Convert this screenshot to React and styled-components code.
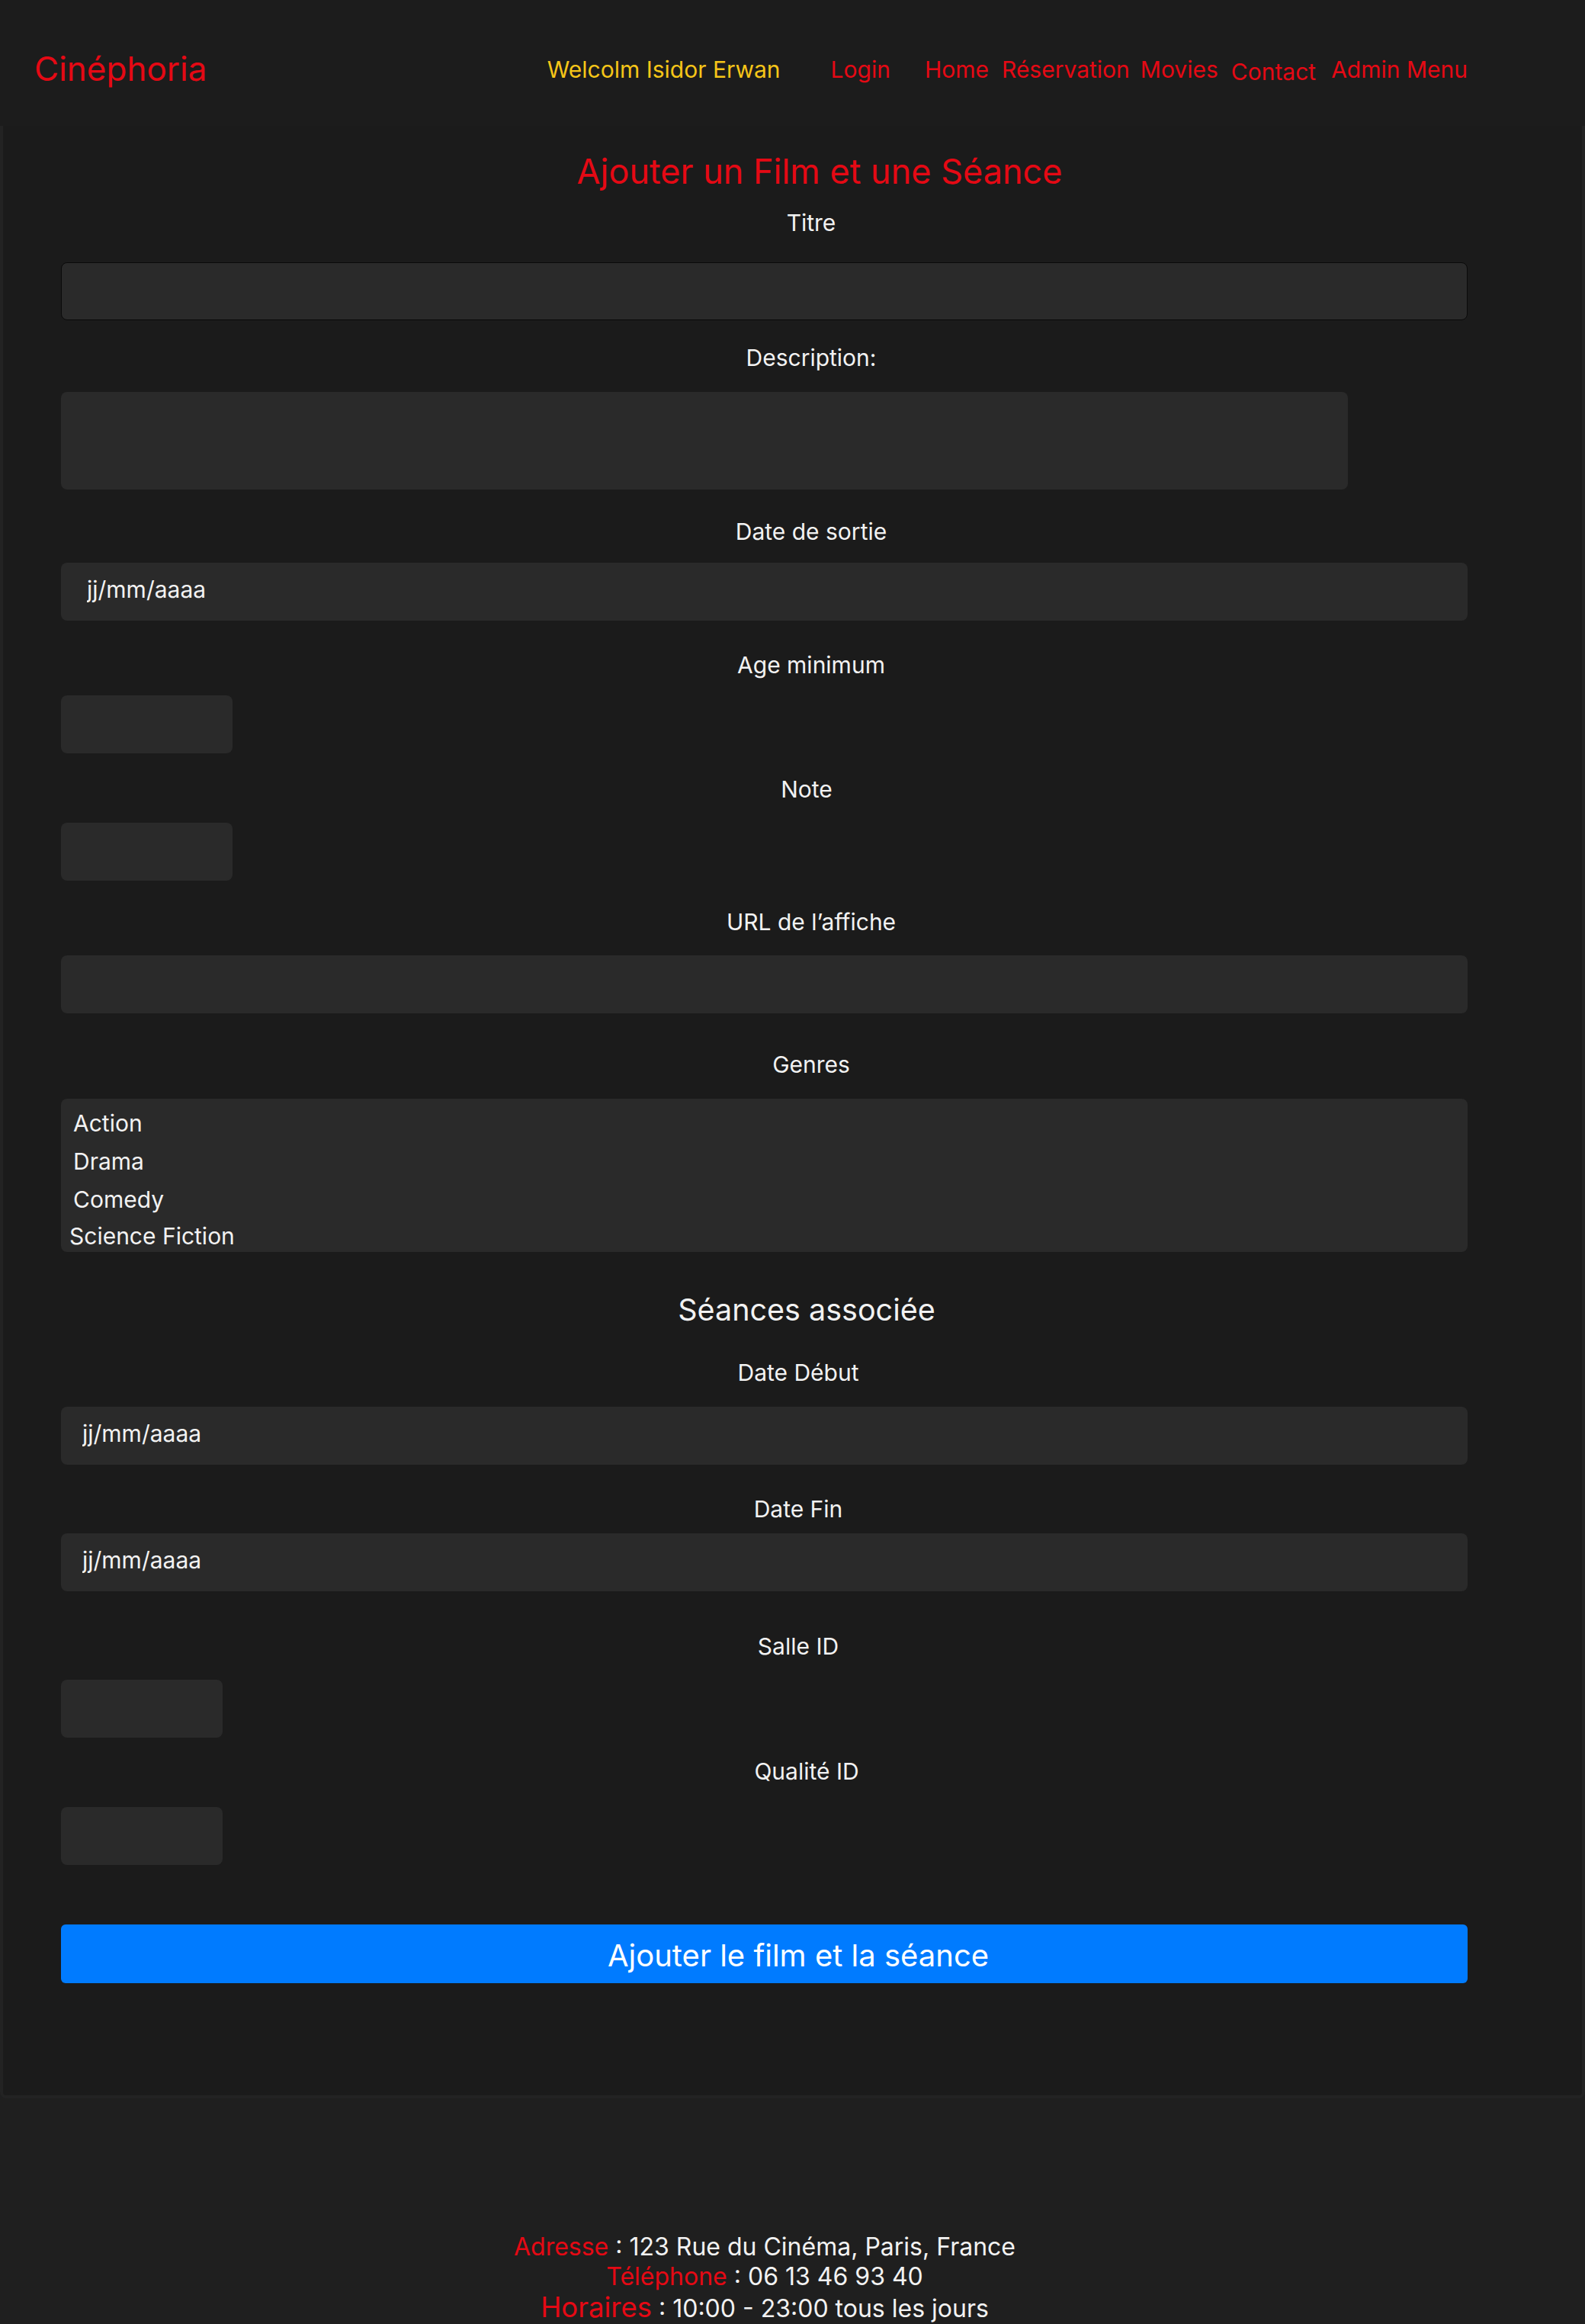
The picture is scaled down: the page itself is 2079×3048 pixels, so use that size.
import React from "react";
import styled, { createGlobalStyle } from "styled-components";

const GlobalStyle = createGlobalStyle`
  body {
    margin: 0;
    background: #1f1f1f;
    font-family: Inter, "Noto Sans", "Liberation Sans", sans-serif;
    color: #f2f2f2;
  }
`;

const RED = "#e50914";

const Header = styled.header`
  height: 165px;
  background: #1c1c1c;
  display: flex;
  align-items: flex-start;
  justify-content: space-between;
  padding: 0 154px 0 45px;
  box-sizing: border-box;
`;

const Brand = styled.div`
  margin-top: 63px;
  font-size: 44px;
  line-height: 54px;
  color: ${RED};
`;

const Nav = styled.nav`
  margin-top: 73px;
  display: flex;
  align-items: flex-start;
  font-size: 30px;
  line-height: 37px;
`;

const Welcome = styled.span`
  color: #f5c518;
  margin-right: 66px;
`;

const NavLink = styled.a`
  color: ${RED};
  text-decoration: none;
  margin-right: ${(p) => p.$gap ?? 17}px;
  padding-top: ${(p) => (p.$drop ? 3 : 0)}px;
  &:last-child {
    margin-right: 0;
  }
`;

const Main = styled.main`
  background: #1b1b1b;
  border: 4px solid #232323;
  border-top: none;
  border-radius: 0 0 8px 8px;
  padding: 32px 27px 147px 76px;
`;

const Form = styled.form`
  display: flex;
  flex-direction: column;
  align-items: flex-start;
`;

const Title = styled.h2`
  align-self: stretch;
  margin: 0;
  padding-left: 22px;
  text-align: center;
  font-size: 45px;
  line-height: 56px;
  font-weight: 400;
  color: ${RED};
`;

const SubTitle = styled.h3`
  align-self: stretch;
  margin: ${(p) => p.$mt}px 0 0;
  padding-right: ${(p) => p.$shift || 0}px;
  text-align: center;
  font-size: 39.5px;
  line-height: 50px;
  font-weight: 400;
  color: #f2f2f2;
`;

const Label = styled.label`
  align-self: stretch;
  display: block;
  margin-top: ${(p) => p.$mt}px;
  padding-right: ${(p) => p.$shift || 0}px;
  text-align: center;
  font-size: 30px;
  line-height: 36px;
  color: #f2f2f2;
`;

const Input = styled.input`
  box-sizing: border-box;
  width: ${(p) => p.$w || 1845}px;
  height: 76px;
  margin-top: ${(p) => p.$mt}px;
  padding: 0 0 6px ${(p) => p.$pl || 34}px;
  background: #2a2a2a;
  border: ${(p) => (p.$bordered ? "1px solid #0a0a0a" : "none")};
  border-radius: 8px;
  font-family: inherit;
  font-size: 30px;
  color: #f2f2f2;
  outline: none;
  &::placeholder {
    color: #f2f2f2;
  }
`;

const TextArea = styled.textarea`
  box-sizing: border-box;
  width: 1688px;
  height: 128px;
  margin-top: ${(p) => p.$mt}px;
  padding: 14px 20px;
  background: #2a2a2a;
  border: none;
  border-radius: 8px;
  resize: none;
  font-family: inherit;
  font-size: 30px;
  color: #f2f2f2;
  outline: none;
`;

const GenreList = styled.div`
  box-sizing: border-box;
  width: 1845px;
  height: 201px;
  margin-top: ${(p) => p.$mt}px;
  padding-top: 7px;
  background: #2a2a2a;
  border-radius: 8px;
  overflow: hidden;
`;

const GenreOption = styled.div`
  padding-left: ${(p) => (p.$tight ? 11 : 16)}px;
  font-size: 30px;
  line-height: ${(p) => (p.$tight ? 46 : 50)}px;
  color: #f2f2f2;
`;

const Submit = styled.button`
  box-sizing: border-box;
  width: 1845px;
  height: 77px;
  margin-top: ${(p) => p.$mt}px;
  padding: 4px 0 0 89px;
  background: #007bff;
  border: none;
  border-radius: 6px;
  font-family: inherit;
  font-size: 40px;
  color: #ffffff;
  cursor: pointer;
`;

const Footer = styled.footer`
  background: #1f1f1f;
  padding: 175px 73px 40px 0;
  text-align: center;
`;

const FooterLine = styled.p`
  margin: 0;
  font-size: 32px;
  line-height: ${(p) => p.$lh || 39}px;
  color: #f2f2f2;
`;

const Key = styled.span`
  color: ${RED};
  font-size: ${(p) => p.$size || 32}px;
`;

const genres = ["Action", "Drama", "Comedy"];

const App = () => {
  return (
    <>
      <GlobalStyle />
      <Header>
        <Brand>Cinéphoria</Brand>
        <Nav>
          <Welcome>Welcolm Isidor Erwan</Welcome>
          <NavLink href="#" $gap={45}>Login</NavLink>
          <NavLink href="#">Home</NavLink>
          <NavLink href="#" $gap={14}>Réservation</NavLink>
          <NavLink href="#">Movies</NavLink>
          <NavLink href="#" $gap={20} $drop>Contact</NavLink>
          <NavLink href="#">Admin Menu</NavLink>
        </Nav>
      </Header>

      <Main>
        <Form onSubmit={(e) => e.preventDefault()}>
          <Title>Ajouter un Film et une Séance</Title>

          <Label $mt={21}>Titre</Label>
          <Input $mt={34} $bordered />

          <Label $mt={31}>Description:</Label>
          <TextArea $mt={27} />

          <Label $mt={37}>Date de sortie</Label>
          <Input $mt={23} placeholder="jj/mm/aaaa" />

          <Label $mt={40}>Age minimum</Label>
          <Input $mt={22} $w={225} />

          <Label $mt={29} $shift={12}>Note</Label>
          <Input $mt={26} $w={225} />

          <Label $mt={36}>URL de l’affiche</Label>
          <Input $mt={26} />

          <Label $mt={49}>Genres</Label>
          <GenreList $mt={27}>
            {genres.map((g) => (
              <GenreOption key={g}>{g}</GenreOption>
            ))}
            <GenreOption $tight>Science Fiction</GenreOption>
          </GenreList>

          <SubTitle $mt={51} $shift={12}>Séances associée</SubTitle>

          <Label $mt={39} $shift={34}>Date Début</Label>
          <Input $mt={27} $pl={28} placeholder="jj/mm/aaaa" />

          <Label $mt={40} $shift={34}>Date Fin</Label>
          <Input $mt={14} $pl={28} placeholder="jj/mm/aaaa" />

          <Label $mt={54} $shift={34}>Salle ID</Label>
          <Input $mt={26} $w={212} />

          <Label $mt={26} $shift={12}>Qualité ID</Label>
          <Input $mt={29} $w={212} />

          <Submit $mt={78} type="submit">Ajouter le film et la séance</Submit>
        </Form>
      </Main>

      <Footer>
        <FooterLine>
          <Key>Adresse</Key> : 123 Rue du Cinéma, Paris, France
        </FooterLine>
        <FooterLine>
          <Key>Téléphone</Key> : 06 13 46 93 40
        </FooterLine>
        <FooterLine $lh={43}>
          <Key $size={36.5}>Horaires</Key> : 10:00 - 23:00 tous les jours
        </FooterLine>
      </Footer>
    </>
  );
};

export default App;
